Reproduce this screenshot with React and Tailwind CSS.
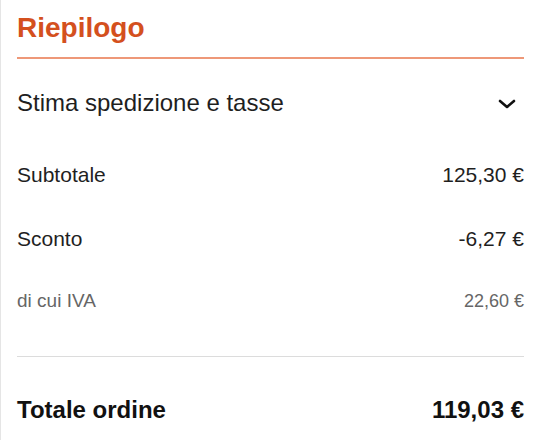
import React from "react";

const rows = [
  { label: "Subtotale", value: "125,30 €" },
  { label: "Sconto", value: "-6,27 €" },
];

const Chevron = () => (
  <svg width="18" height="10" viewBox="0 0 18 10" fill="none">
    <polyline
      points="2,2 9,8 16,2"
      stroke="#111"
      strokeWidth="2.6"
      strokeLinecap="round"
      strokeLinejoin="round"
    />
  </svg>
);

const App = () => {
  return (
    <div className="h-[440px] overflow-hidden bg-white border-l border-l-[#e5e5e5] pl-4 pr-[21px] font-['Liberation_Sans',Arial,sans-serif] text-[#1f1f1f]">
      <div className="pt-[11px] pb-3">
        <h2 className="text-[28px] leading-[34px] font-bold text-[#d4501e]">Riepilogo</h2>
      </div>
      <div className="h-[2px] bg-[#ee9878]" />

      <div className="flex items-center justify-between h-[84px] pt-[3px]">
        <span className="text-[24px] leading-[30px]">Stima spedizione e tasse</span>
        <span className="mr-2 pt-[2px]">
          <Chevron />
        </span>
      </div>

      {rows.map((row) => (
        <div key={row.label} className="flex items-center justify-between h-16">
          <span className="text-[21px] leading-[28px]">{row.label}</span>
          <span className="text-[21px] leading-[28px]">{row.value}</span>
        </div>
      ))}

      <div className="flex items-center justify-between h-[62px] pb-[2px] text-[#666]">
        <span className="text-[19px] leading-[24px]">di cui IVA</span>
        <span className="text-[18px] leading-[24px]">22,60 €</span>
      </div>

      <div className="h-px bg-[#dcdcdc] mt-[23px]" />

      <div className="flex items-center justify-between pt-[38px] font-bold text-[#111]">
        <span className="text-[24px] leading-[30px]">Totale ordine</span>
        <span className="text-[24px] leading-[30px]">119,03 €</span>
      </div>
    </div>
  );
};

export default App;
